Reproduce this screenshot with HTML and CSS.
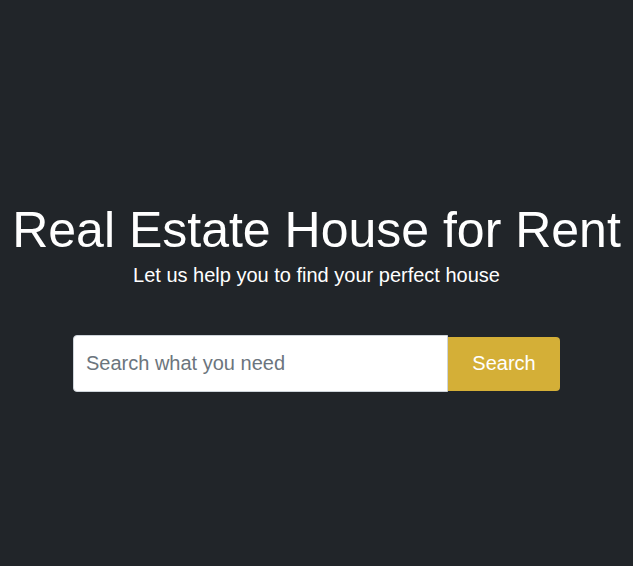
FILE: index.html
```html
<!DOCTYPE html>
<html lang="en">
<head>
<meta charset="utf-8">
<title>Real Estate House for Rent</title>
<link rel="stylesheet" href="styles.css">
</head>
<body>
<main class="hero">
  <h1 class="hero-title">Real Estate House for Rent</h1>
  <p class="hero-lead">Let us help you to find your perfect house</p>
  <form class="search-group">
    <input class="search-input" type="text" placeholder="Search what you need">
    <button class="search-btn" type="button">Search</button>
  </form>
</main>
</body>
</html>
```
FILE: styles.css
```css
html, body {
  margin: 0;
  padding: 0;
  height: 100%;
}
body {
  background: #212529;
  color: #fff;
  font-family: "Liberation Sans", Arial, sans-serif;
}
.hero {
  display: flex;
  flex-direction: column;
  align-items: center;
  padding-top: 200px;
}
.hero-title {
  margin: 0;
  font-size: 50px;
  font-weight: 400;
  line-height: 1.2;
  white-space: nowrap;
}
.hero-lead {
  margin: 0;
  font-size: 20px;
  line-height: 30px;
}
.search-group {
  display: flex;
  align-items: center;
  margin-top: 45px;
  width: 487px;
}
.search-input {
  box-sizing: border-box;
  width: 375px;
  height: 57px;
  padding: 0 12px;
  border: 1px solid #ced4da;
  border-radius: 4px 0 0 4px;
  font-family: "Liberation Sans", Arial, sans-serif;
  font-size: 20px;
  color: #495057;
  background: #fff;
  outline: none;
}
.search-input::placeholder {
  color: #6c757d;
}
.search-btn {
  box-sizing: border-box;
  width: 112px;
  height: 54px;
  border: none;
  border-radius: 0 4px 4px 0;
  background: #d4af37;
  color: #fff;
  font-family: "Liberation Sans", Arial, sans-serif;
  font-size: 20px;
  cursor: pointer;
}
```
